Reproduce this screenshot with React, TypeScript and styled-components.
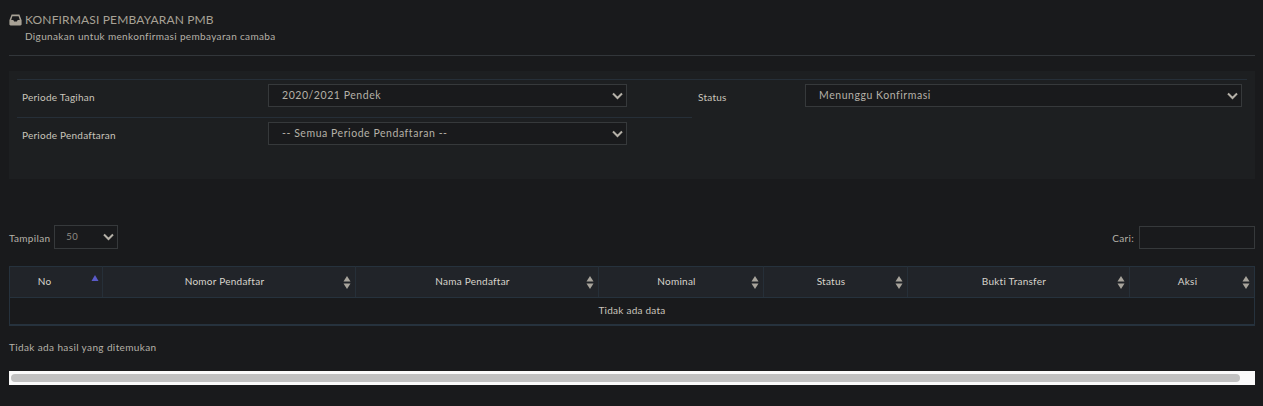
import React from 'react';
import styled, { createGlobalStyle } from 'styled-components';

const GlobalStyle = createGlobalStyle`
  html, body {
    margin: 0;
    background: #191a1c;
    height: 406px;
    overflow: hidden;
  }
  body {
    font-family: Lato, 'Noto Sans', sans-serif;
    font-size: 10px;
    color: #c9c5bc;
  }
`;

const Page = styled.div`
  padding: 12px 8px 0 9px;
`;

const Header = styled.header`
  height: 44px;
  box-sizing: border-box;
  border-bottom: 1px solid #32363a;
`;

const TitleRow = styled.div`
  display: flex;
  align-items: center;
  gap: 3px;
  height: 15px;
`;

const Title = styled.h1`
  margin: 0;
  font-size: 12px;
  font-weight: 400;
  line-height: 15px;
  letter-spacing: 0.15px;
  color: #a8a296;
`;

const Subtitle = styled.p`
  margin: 3px 0 0 16px;
  font-size: 10px;
  line-height: 12px;
  letter-spacing: 0.35px;
  color: #b5b1a8;
`;

const FilterPanel = styled.section`
  display: grid;
  grid-template-columns: 675px 1fr;
  height: 108px;
  margin-top: 15px;
  padding: 8px 8px 0;
  box-sizing: border-box;
  background: #1d1f21;
`;

const FilterColumn = styled.div`
  display: flex;
  flex-direction: column;
`;

const FilterRow = styled.div`
  display: grid;
  grid-template-columns: 246px 359px;
  align-items: center;
  height: 38px;
  box-sizing: border-box;
  padding-left: 5px;
  border-top: 1px solid #262f38;
`;

const StatusRow = styled.div`
  display: grid;
  grid-template-columns: 107px 437px;
  align-items: center;
  height: 38px;
  box-sizing: border-box;
  padding-left: 6px;
  border-top: 1px solid #262f38;
`;

const FieldLabel = styled.label`
  margin-top: -2px;
  font-size: 10px;
  line-height: 13px;
  letter-spacing: 0.23px;
  color: #c9c5bc;
`;

const SelectBox = styled.div`
  position: relative;
  display: flex;
  align-items: center;
  width: 100%;
  height: 23px;
  margin-top: -6px;
  padding: 0 0 2px 13px;
  box-sizing: border-box;
  background: #191a1c;
  border: 1px solid #36393b;
  color: #b5b1a8;
  font-size: 10.5px;
  letter-spacing: 0.55px;
`;

const SmallSelect = styled(SelectBox)`
  width: 64px;
  height: 24px;
  margin: 0;
  padding-left: 11px;
  font-size: 9.5px;
  color: #8f8b83;
`;

const Chevron = styled.svg`
  position: absolute;
  right: 3px;
  top: 50%;
  width: 11px;
  height: 8px;
  margin-top: -4px;
  fill: none;
  stroke: #b5b1a8;
  stroke-width: 2;
`;

const TableControls = styled.div`
  display: flex;
  align-items: center;
  justify-content: space-between;
  margin-top: 46px;
  height: 24px;
`;

const ControlGroup = styled.div`
  display: flex;
  align-items: center;
  gap: 4px;
`;

const ControlLabel = styled.span`
  font-size: 10px;
  letter-spacing: 0.3px;
  color: #b5b1a8;
  padding-top: 2px;
`;

const SearchInput = styled.input`
  width: 116px;
  height: 23px;
  margin-left: 1px;
  padding: 0;
  box-sizing: border-box;
  background: #191a1c;
  border: 1px solid #36393b;
  outline: none;
`;

const DataTable = styled.table`
  width: 1245px;
  margin-top: 17px;
  border-collapse: collapse;
  table-layout: fixed;
  border: 1px solid #26323d;
  border-bottom-width: 2px;
`;

const HeadCell = styled.th<{ $width: number; $sorted?: boolean }>`
  position: relative;
  width: ${p => p.$width}px;
  height: 31px;
  padding: 0 ${p => (p.$sorted ? 23 : 9)}px 2px 0;
  box-sizing: border-box;
  background: #212429;
  border-bottom: 1px solid #26323d;
  border-left: 1px solid #262f38;
  font-size: 10px;
  font-weight: 400;
  letter-spacing: 0.25px;
  text-align: center;
  color: #d8d4cc;

  &:first-child {
    border-left: 0;
  }
`;

const SortIcon = styled.svg`
  position: absolute;
  right: 4px;
  top: 9px;
  width: 8px;
  height: 13px;
`;

const AscIcon = styled.svg`
  position: absolute;
  right: 3px;
  top: 8px;
  width: 8px;
  height: 6px;
`;

const EmptyCell = styled.td`
  height: 27px;
  padding: 0 0 2px;
  box-sizing: border-box;
  font-size: 10px;
  letter-spacing: 0.25px;
  text-align: center;
  color: #c9c5bc;
`;

const ResultInfo = styled.p`
  margin: 15px 0 0;
  font-size: 10px;
  line-height: 13px;
  letter-spacing: 0.38px;
  color: #b5b1a8;
`;

const ScrollTrack = styled.div`
  height: 14px;
  margin-top: 17px;
  padding: 3px 15px 3px 2px;
  box-sizing: border-box;
  background: #fafafa;
`;

const ScrollThumb = styled.div`
  height: 8px;
  border-radius: 4px;
  background: #c1c1c1;
`;

const columns = [
  { label: 'No', width: 93 },
  { label: 'Nomor Pendaftar', width: 253 },
  { label: 'Nama Pendaftar', width: 243 },
  { label: 'Nominal', width: 165 },
  { label: 'Status', width: 144 },
  { label: 'Bukti Transfer', width: 222 },
  { label: 'Aksi', width: 125 },
];

const ChevronIcon = () => (
  <Chevron viewBox="0 0 11 8">
    <path d="M1 1.5 L5.5 6 L10 1.5" />
  </Chevron>
);

const Sort = () => (
  <SortIcon viewBox="0 0 8 13">
    <path d="M4 0 L7.5 5.5 H0.5 Z" fill="#a8a49c" />
    <path d="M4 13 L7.5 7.5 H0.5 Z" fill="#a8a49c" />
  </SortIcon>
);

const InboxIcon = () => (
  <svg width="13" height="12" viewBox="0 0 13 12">
    <path
      d="M2.6 0.5 H10.4 L12.6 6.2 V10.3 C12.6 11 12.1 11.5 11.4 11.5 H1.6 C0.9 11.5 0.4 11 0.4 10.3 V6.2 Z M3.4 2.2 L2.2 6 H4.3 L5.1 7.6 H7.9 L8.7 6 H10.8 L9.6 2.2 Z"
      fill="#a8a296"
      fillRule="evenodd"
    />
  </svg>
);

export default function App() {
  return (
    <Page>
      <GlobalStyle />
      <Header>
        <TitleRow>
          <InboxIcon />
          <Title>KONFIRMASI PEMBAYARAN PMB</Title>
        </TitleRow>
        <Subtitle>Digunakan untuk menkonfirmasi pembayaran camaba</Subtitle>
      </Header>

      <FilterPanel>
        <FilterColumn>
          <FilterRow>
            <FieldLabel>Periode Tagihan</FieldLabel>
            <SelectBox>
              2020/2021 Pendek
              <ChevronIcon />
            </SelectBox>
          </FilterRow>
          <FilterRow>
            <FieldLabel>Periode Pendaftaran</FieldLabel>
            <SelectBox>
              -- Semua Periode Pendaftaran --
              <ChevronIcon />
            </SelectBox>
          </FilterRow>
        </FilterColumn>
        <FilterColumn>
          <StatusRow>
            <FieldLabel>Status</FieldLabel>
            <SelectBox>
              Menunggu Konfirmasi
              <ChevronIcon />
            </SelectBox>
          </StatusRow>
        </FilterColumn>
      </FilterPanel>

      <TableControls>
        <ControlGroup>
          <ControlLabel>Tampilan</ControlLabel>
          <SmallSelect>
            50
            <ChevronIcon />
          </SmallSelect>
        </ControlGroup>
        <ControlGroup>
          <ControlLabel>Cari:</ControlLabel>
          <SearchInput aria-label="Cari" />
        </ControlGroup>
      </TableControls>

      <DataTable>
        <thead>
          <tr>
            {columns.map((col, i) => (
              <HeadCell key={col.label} $width={col.width} $sorted={i === 0}>
                {col.label}
                {i === 0 ? (
                  <AscIcon viewBox="0 0 8 6">
                    <path d="M4 0 L7.5 6 H0.5 Z" fill="#5a5ac8" />
                  </AscIcon>
                ) : (
                  <Sort />
                )}
              </HeadCell>
            ))}
          </tr>
        </thead>
        <tbody>
          <tr>
            <EmptyCell colSpan={7}>Tidak ada data</EmptyCell>
          </tr>
        </tbody>
      </DataTable>

      <ResultInfo>Tidak ada hasil yang ditemukan</ResultInfo>

      <ScrollTrack>
        <ScrollThumb />
      </ScrollTrack>
    </Page>
  );
}
